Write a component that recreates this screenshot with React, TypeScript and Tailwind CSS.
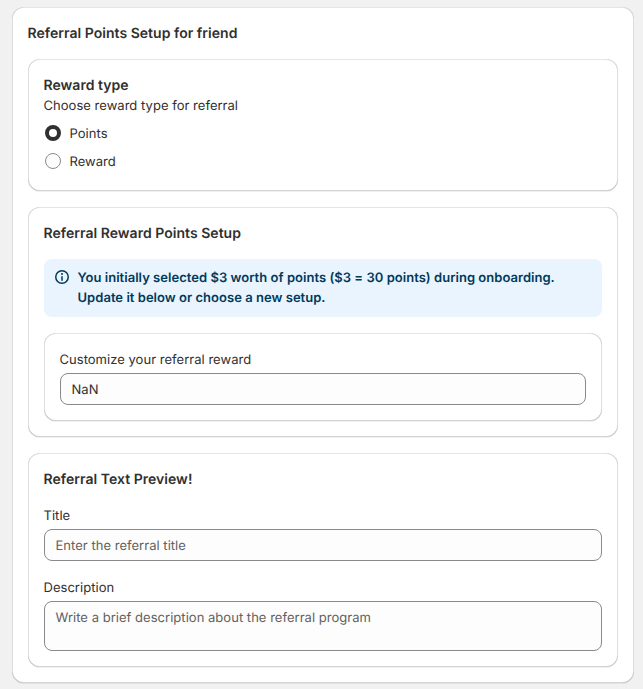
import React from 'react';

const card =
  'rounded-xl bg-white p-4 shadow-[0_1px_0_0_rgba(26,26,26,0.07),inset_1px_0_0_0_rgba(0,0,0,0.13),inset_-1px_0_0_0_rgba(0,0,0,0.13),inset_0_-1px_0_0_rgba(0,0,0,0.17),inset_0_1px_0_0_rgba(204,204,204,0.5)]';
const field =
  'block w-full rounded-lg border border-[#8a8a8a] bg-[#fdfdfd] px-[10.5px] text-[13px] leading-5 tracking-[0.03px] text-[#303030] placeholder:text-[#616161] outline-none [text-rendering:geometricPrecision]';
const input = `${field} h-8 pt-[6px] pb-[4px]`;
const heading = '-mb-px -ml-[0.5px] pt-px text-[14px] leading-5 font-semibold';
const label = 'mb-[3px] -ml-[0.5px] pt-px';

function Radio({ text, checked }: { text: string; checked?: boolean }) {
  return (
    <label className="flex h-7 items-center gap-[8.5px] pl-px">
      <span
        className={
          checked
            ? 'size-4 rounded-full border-4 border-[#303030] bg-white'
            : 'size-4 rounded-full border border-[#8a8a8a] bg-[#fdfdfd]'
        }
      />
      <span className="-mb-px pt-px">{text}</span>
    </label>
  );
}

export default function App() {
  return (
    <div className="h-[689px] bg-[#f1f1f1] pt-[7px] pr-[9px] pl-3 font-['Inter',sans-serif] text-[13px] leading-5 font-normal tracking-[0.03px] text-[#303030] [text-rendering:geometricPrecision]">
      <div className={`${card} flex flex-col gap-4`}>
        <h2 className={heading}>Referral Points Setup for friend</h2>
        <section className={card}>
          <h3 className={heading}>Reward type</h3>
          <p className={label}>Choose reward type for referral</p>
          <Radio text="Points" checked />
          <Radio text="Reward" />
        </section>
        <section className={`${card} flex flex-col gap-4`}>
          <h3 className={heading}>Referral Reward Points Setup</h3>
          <div className="flex h-[58px] gap-[5.5px] rounded-lg bg-[#eaf4ff] px-2 pt-2 text-[#003a5a]">
            <svg viewBox="0 0 20 20" className="size-5 shrink-0" fill="currentColor">
              <path d="M10 14a.75.75 0 0 1-.75-.75v-3.5a.75.75 0 0 1 1.5 0v3.5a.75.75 0 0 1-.75.75Z" />
              <path d="M9 7a1 1 0 1 1 2 0 1 1 0 0 1-2 0Z" />
              <path fillRule="evenodd" d="M17 10a7 7 0 1 1-14 0 7 7 0 0 1 14 0Zm-1.5 0a5.5 5.5 0 1 1-11 0 5.5 5.5 0 0 1 11 0Z" />
            </svg>
            <p className="pt-px font-semibold">
              You initially selected $3 worth of points ($3 = 30 points) during onboarding.
              <br />
              Update it below or choose a new setup.
            </p>
          </div>
          <div className={card}>
            <p className={label}>Customize your referral reward</p>
            <input className={input} defaultValue="NaN" />
          </div>
        </section>
        <section className={card}>
          <h3 className={heading}>Referral Text Preview!</h3>
          <p className={`${label} mt-4`}>Title</p>
          <input className={input} placeholder="Enter the referral title" />
          <p className={`${label} mt-4`}>Description</p>
          <textarea
            className={`${field} h-[50px] resize-none pt-[6px] pb-[4px]`}
            placeholder="Write a brief description about the referral program"
          />
        </section>
      </div>
    </div>
  );
}
